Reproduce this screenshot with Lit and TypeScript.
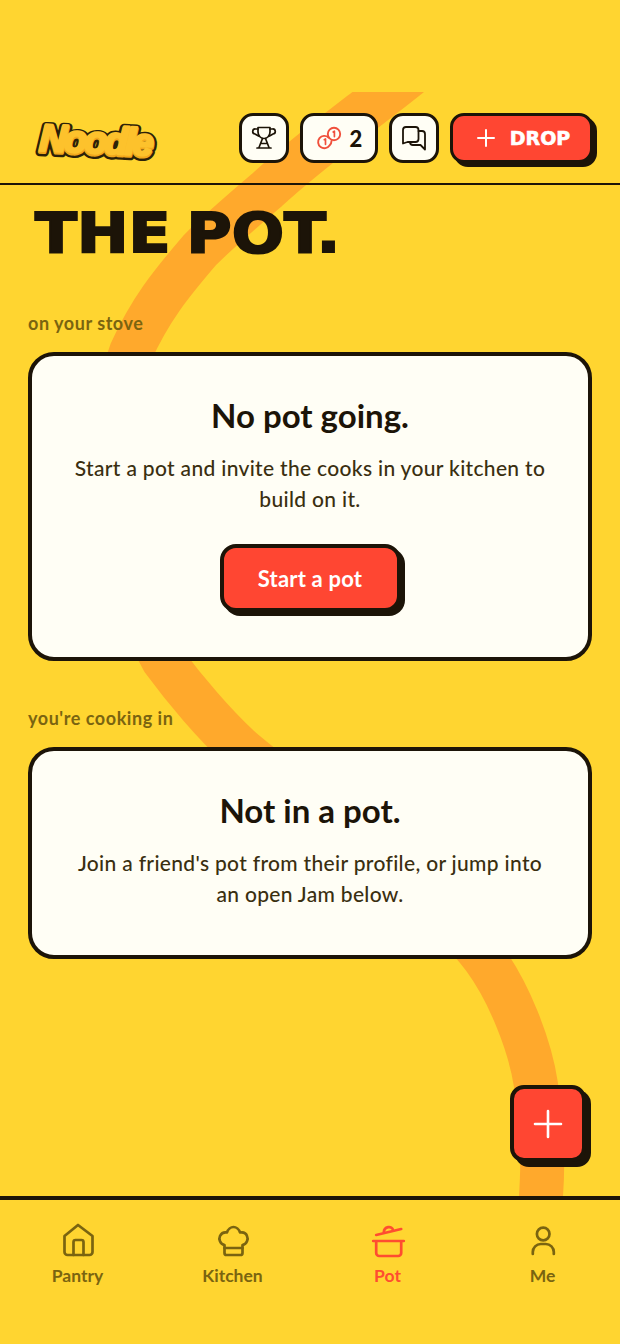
import { LitElement, html, css, svg } from "lit";
import { customElement } from "lit/decorators.js";

const icon = (w: number, sw: number, body: unknown) => html`<svg width=${w} height=${w} viewBox="0 0 ${w} ${w}" fill="none" stroke="currentColor" stroke-width=${sw} stroke-linecap="round" stroke-linejoin="round">${body}</svg>`;

@customElement("app-root")
export class AppRoot extends LitElement {
  static styles = css`
    :host { display: block; width: 620px; height: 1344px; overflow: hidden; position: relative; background: #ffd530; font-family: "Lato", "Inter", sans-serif; color: #1c1408; }
    .noodle { position: absolute; left: 0; top: 92px; width: 620px; height: 1110px; }
    .page { position: relative; display: flex; flex-direction: column; height: 1344px; }
    header { margin-top: 110px; box-sizing: border-box; border-bottom: 2px solid #1c1408; display: flex; align-items: flex-start; justify-content: space-between; padding: 3px 27px 0 30px; height: 75px; }
    .logo { display: block; width: 130px; height: 56px; margin-top: -3px; }
    .logo text { font-family: "Liberation Sans", sans-serif; font-weight: 700; font-style: italic; font-size: 38px; letter-spacing: -2.9px; stroke-linejoin: round; stroke-linecap: round; }
    .logo .edge { fill: #2c2208; stroke: #2c2208; stroke-width: 8.5px; }
    .logo .shade { fill: #f2a81c; stroke: #f2a81c; stroke-width: 3.6px; }
    .logo .face { fill: #fdc22c; stroke: #fdc22c; stroke-width: 2.6px; }
    .actions { display: flex; gap: 11px; align-items: flex-start; }
    .ib { box-sizing: border-box; height: 50px; min-width: 50px; border: 3px solid #1c1408; border-radius: 14px; background: #fffef5; display: flex; align-items: center; justify-content: center; gap: 8px; color: #1c1408; }
    .coins { width: 78px; font-size: 22px; font-weight: 900; }
    .coins svg { color: #f0503c; }
    .drop { box-sizing: border-box; width: 143px; height: 50px; border: 3px solid #1c1408; border-radius: 14px; background: #ff4632; color: #fff; box-shadow: 4px 4px 0 #1c1408; display: flex; align-items: center; justify-content: center; gap: 11px; font-family: "DejaVu Sans", sans-serif; font-weight: 700; font-size: 19px; -webkit-text-stroke: 0.6px #fff; }
    main { flex: 1; padding: 0 28px; display: flex; flex-direction: column; }
    h1 { margin: 19px 0 0 7px; font-family: "DejaVu Sans", sans-serif; font-weight: 700; font-size: 56px; line-height: 58px; word-spacing: -5px; -webkit-text-stroke: 2px #1c1408; color: #1c1408; transform: scaleX(1.1); transform-origin: left center; white-space: nowrap; }
    .label { font-size: 18px; font-weight: 700; letter-spacing: 0.55px; color: #7a6410; line-height: 24px; }
    .l1 { margin-top: 49px; }
    .l2 { margin-top: 45px; }
    .card { box-sizing: border-box; margin-top: 17px; width: 564px; border: 4px solid #1c1408; border-radius: 26px; background: #fffef5; display: flex; flex-direction: column; align-items: center; text-align: center; padding: 35px 36px 0; }
    .c1 { height: 309px; }
    .c2 { height: 212px; }
    h2 { margin: 0; font-size: 33px; font-weight: 700; line-height: 48px; color: #1c1408; }
    p { margin: 13px 0 0; font-size: 21px; line-height: 31px; letter-spacing: 0.32px; color: #3a2f10; font-weight: 500; }
    .start { box-sizing: border-box; margin-top: 30px; width: 181px; height: 68px; border: 4px solid #1c1408; border-radius: 16px; background: #ff4632; color: #fff; font-size: 22px; font-weight: 700; letter-spacing: 0.2px; display: flex; align-items: center; justify-content: center; box-shadow: 4px 4px 0 #1c1408; }
    .fab { position: absolute; left: 510px; top: 1085px; box-sizing: border-box; width: 76px; height: 77px; border: 4px solid #1c1408; border-radius: 14px; background: #ff4632; color: #fff; box-shadow: 5px 5px 0 #1c1408; display: flex; align-items: center; justify-content: center; }
    nav { box-sizing: border-box; height: 148px; border-top: 4px solid #1c1408; background: #ffd530; display: grid; grid-template-columns: repeat(4, 1fr); }
    .tab { display: flex; flex-direction: column; align-items: center; padding-top: 23px; color: #7a6410; font-size: 17.5px; font-weight: 700; line-height: 24px; gap: 5px; }
    .tab.on { color: #ff4d30; }
  `;

  render() {
    const word = (cls: string, dy: number) => svg`<text class=${cls} x="9" y=${42 + dy} transform="rotate(2.5 9 42)">Noodle</text>`;
    return html`
      <svg class="noodle" viewBox="0 92 620 1110" fill="none"><path d="M410 75 C360 115 310 150 267 190 C240 213 220 230 200 250 C170 285 150 310 131 352 C105 420 105 560 163 660 C185 690 215 725 239 747 C300 800 430 885 484 958 C509 992 530 1045 536 1085 C541 1120 545 1150 540 1210" stroke="#ffa92c" stroke-width="44"/></svg>
      <div class="page">
        <header>
          <svg class="logo" viewBox="0 0 130 56" role="img" aria-label="Noodle">${word("edge", 0)}${word("shade", 0)}${word("face", -1.5)}</svg>
          <div class="actions">
            <div class="ib">${icon(30, 1.7, svg`<path d="M9 4.500H21V9C21 13 18 15.500 15 15.500C12 15.500 9 13 9 9Z"/><path d="M9 6H6.500a2.500 2.500 0 0 0-.5 5L9.500 13M21 6h2.500a2.500 2.500 0 0 1 .5 5L20.500 13"/><path d="M13.500 15.500 10 24.500M16.500 15.500 20 24.500M8 25H22M12 20.500H18"/>`)}</div>
            <div class="ib coins">${icon(26, 1.9, svg`<circle cx="18" cy="9" r="6.200"/><path d="M12.500 12.500A6.200 6.200 0 1 0 13.500 20.500A6.200 6.200 0 0 0 15.500 16"/><path d="M17.200 7l1.200-.8v5.400M8.300 14.700l1.200-.8v5.400" stroke-width="1.700"/>`)}<span>2</span></div>
            <div class="ib">${icon(30, 1.8, svg`<path d="M7 4H16.500a3 3 0 0 1 3 3V16a3 3 0 0 1-3 3H8.500L4 20.500V7a3 3 0 0 1 3-3z"/><path d="M19.500 8H23a3 3 0 0 1 3 3V26.500L21.500 22H14a3 3 0 0 1-3-3"/>`)}</div>
            <div class="drop">${icon(26, 2, svg`<path d="M13 5V21M5 13H21"/>`)}<span>DROP</span></div>
          </div>
        </header>
        <main>
          <h1>THE POT.</h1>
          <div class="label l1">on your stove</div>
          <section class="card c1">
            <h2>No pot going.</h2>
            <p>Start a pot and invite the cooks in your kitchen to build on it.</p>
            <div class="start">Start a pot</div>
          </section>
          <div class="label l2">you're cooking in</div>
          <section class="card c2">
            <h2>Not in a pot.</h2>
            <p>Join a friend's pot from their profile, or jump into an open Jam below.</p>
          </section>
        </main>
        <nav>
          <div class="tab">${icon(36, 2.7, svg`<path d="M18 2 32.500 13V29a3 3 0 0 1-3 3H7.500a3 3 0 0 1-3-3V13Z"/><path d="M13.500 32V19a2 2 0 0 1 2-2h6a2 2 0 0 1 2 2V32"/>`)}<span>Pantry</span></div>
          <div class="tab">${icon(36, 2.7, svg`<path d="M9.500 22C5 21 3.500 16 5 13C6.500 10 9.500 9 12 9.500C13 6 16 4 18.500 4C21 4 24 6 25 9.500C28 9 31 10 32 13C33.500 16 32 21 27.500 22V30a2 2 0 0 1-2 2H11.500a2 2 0 0 1-2-2Z"/><path d="M9.500 25H27.500"/>`)}<span>Kitchen</span></div>
          <div class="tab on">${icon(36, 2.7, svg`<path d="M3.200 18H33.800M6.200 18V30a3 3 0 0 0 3 3H28.200a3 3 0 0 0 3-3V18"/><path d="M6.200 12 31.200 6M13.800 9.300C14 4 22 1.500 23.200 7.700"/>`)}<span>Pot</span></div>
          <div class="tab">${icon(36, 2.7, svg`<circle cx="18.200" cy="11" r="6.300"/><path d="M7.800 31V29a8 8 0 0 1 8-8h5a8 8 0 0 1 8 8v2"/>`)}<span>Me</span></div>
        </nav>
        <div class="fab">${icon(36, 2.6, svg`<path d="M18 5V31M5 18H31"/>`)}</div>
      </div>
    `;
  }
}
